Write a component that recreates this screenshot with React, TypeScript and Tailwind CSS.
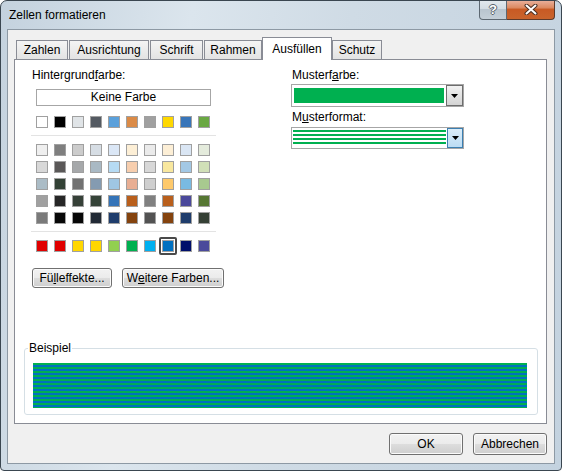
import React from 'react';

const themeRow = [
  'bg-[#ffffff]', 'bg-[#000000]', 'bg-[#e0e4e7]', 'bg-[#545a62]', 'bg-[#5aa0db]',
  'bg-[#db8b47]', 'bg-[#a0a0a0]', 'bg-[#ffd800]', 'bg-[#3875b9]', 'bg-[#6aa843]',
];

const tintRows = [
  ['bg-[#efefef]', 'bg-[#7f7f7f]', 'bg-[#cccccc]', 'bg-[#d6dde4]', 'bg-[#dbe7f6]', 'bg-[#fdefd6]', 'bg-[#ebebeb]', 'bg-[#fdefd6]', 'bg-[#dae6f4]', 'bg-[#e4ebdc]'],
  ['bg-[#d8d8d8]', 'bg-[#5a5858]', 'bg-[#a6a8aa]', 'bg-[#a9b9c4]', 'bg-[#b6dbf4]', 'bg-[#f7ceae]', 'bg-[#d8d8d8]', 'bg-[#f8e79e]', 'bg-[#a3c8e5]', 'bg-[#d1e0b8]'],
  ['bg-[#abbcc6]', 'bg-[#334135]', 'bg-[#727272]', 'bg-[#849bb1]', 'bg-[#9fc6e3]', 'bg-[#e8ae93]', 'bg-[#cfcfcf]', 'bg-[#fec96b]', 'bg-[#79bae2]', 'bg-[#a8c98f]'],
  ['bg-[#a0a0a0]', 'bg-[#262626]', 'bg-[#364138]', 'bg-[#364439]', 'bg-[#3574b8]', 'bg-[#b95f1c]', 'bg-[#808080]', 'bg-[#b95f1c]', 'bg-[#4b499b]', 'bg-[#567733]'],
  ['bg-[#7a7a7a]', 'bg-[#070707]', 'bg-[#070707]', 'bg-[#222a35]', 'bg-[#1f3d6c]', 'bg-[#84430e]', 'bg-[#535252]', 'bg-[#84430e]', 'bg-[#1f3d6c]', 'bg-[#354035]'],
];

const standardRow = [
  'bg-[#e00000]', 'bg-[#e00000]', 'bg-[#ffd700]', 'bg-[#ffd700]', 'bg-[#92d050]',
  'bg-[#00b050]', 'bg-[#00b0f0]', 'bg-[#0070c0]', 'bg-[#000f6b]', 'bg-[#4b4a9b]',
];

const tabs = [
  { label: 'Zahlen', cls: 'w-[52px]' },
  { label: 'Ausrichtung', cls: 'w-[80px] ml-[1px]' },
  { label: 'Schrift', cls: 'w-[53px] ml-[1px]' },
  { label: 'Rahmen', cls: 'w-[58px] ml-[1px]' },
  { label: 'Ausfüllen', cls: 'w-[70px] ml-0', active: true },
  { label: 'Schutz', cls: 'w-[50px] ml-0' },
];

const btn =
  'flex items-center justify-center rounded-[3px] border border-[#707070] bg-[linear-gradient(#f2f2f2_0%,#ebebeb_50%,#dddddd_50%,#cfcfcf_100%)] shadow-[inset_0_0_0_1px_#fbfbfb] leading-[15px]';

function Swatch({ c, selected }: { c: string; selected?: boolean }) {
  return (
    <span className="relative block">
      <span className={`block h-[12px] w-[12px] border border-[#a0a0a0] ${c}`} />
      {selected && (
        <span className="absolute -inset-[3px] rounded-[2px] border-2 border-[#4a4a4a]" />
      )}
    </span>
  );
}

function SwatchRow({ colors, selected }: { colors: string[]; selected?: number }) {
  return (
    <div className="flex gap-[6px]">
      {colors.map((c, i) => (
        <Swatch key={i} c={c} selected={i === selected} />
      ))}
    </div>
  );
}

function Arrow() {
  return (
    <svg width="7" height="4" viewBox="0 0 7 4">
      <polygon points="0,0 7,0 3.5,4" fill="#000" />
    </svg>
  );
}

export default function App() {
  return (
    <div className="relative h-[471px] w-[562px] overflow-hidden rounded-t-[7px] rounded-b-[4px] border border-[#3a4650] bg-[linear-gradient(100deg,#c4d2de_0%,#dbe5ed_30%,#cfdbe5_55%,#c3d2df_100%)] font-['Liberation_Sans',Arial,sans-serif] text-[12px] text-black">
      {/* title bar */}
      <div className="flex h-[28px] items-center pl-[8px] leading-[15px]">Zellen formatieren</div>

      <div className="absolute right-[6px] top-[-1px] flex h-[20px]">
        <div className="flex w-[28px] items-center justify-center rounded-bl-[4px] border border-t-0 border-[#5d6872] bg-[linear-gradient(#e3e9ee_0%,#d2dbe2_50%,#b9c5cf_50%,#c4cfd8_100%)] text-[13px] font-bold leading-none text-white [text-shadow:1px_0_0_#59636c,-1px_0_0_#59636c,0_1px_0_#59636c,0_-1px_0_#59636c]">
          ?
        </div>
        <div className="flex w-[48px] items-center justify-center rounded-br-[4px] border border-l-0 border-t-0 border-[#5d3a2a] bg-[linear-gradient(#eab3a0_0%,#db8a62_40%,#c85a24_50%,#c9642c_100%)]">
          <svg width="14" height="11" viewBox="0 0 14 11">
            <path d="M2.5 1.5 L11.5 9.5 M11.5 1.5 L2.5 9.5" stroke="#4a2e22" strokeWidth="4" strokeLinecap="round" />
            <path d="M2.5 1.5 L11.5 9.5 M11.5 1.5 L2.5 9.5" stroke="#ffffff" strokeWidth="2" strokeLinecap="round" />
          </svg>
        </div>
      </div>

      {/* client area */}
      <div className="mx-[6px] flex h-[435px] flex-col border border-[#8d99a4] bg-[#f0f0f0]">
        <div className="ml-[6px] mt-[7px] w-[533px]">
          <div className="relative z-10 flex h-[22px] items-end pl-[2px]">
            {tabs.map((t) =>
              t.active ? (
                <div
                  key={t.label}
                  className={`-mb-px flex h-[23px] items-center justify-center border border-b-0 border-[#898c95] bg-white leading-[15px] ${t.cls}`}
                >
                  {t.label}
                </div>
              ) : (
                <div
                  key={t.label}
                  className={`flex h-[19px] items-center justify-center border border-b-0 border-[#898c95] bg-[linear-gradient(#f4f4f4,#e3e3e3)] leading-[15px] ${t.cls}`}
                >
                  {t.label}
                </div>
              ),
            )}
          </div>

          <div className="flex h-[365px] flex-col border border-[#898c95] bg-white">
            <div className="flex pt-[8px]">
              {/* left column */}
              <div className="ml-[17px] flex w-[200px] flex-col">
                <div className="leading-[15px]">
                  Hintergrund<u>f</u>arbe:
                </div>
                <div className="ml-[4px] mt-[6px] flex h-[17px] w-[175px] items-center justify-center border border-[#a6a6a6] bg-white leading-[15px]">
                  Keine Farbe
                </div>
                <div className="ml-[4px] mt-[10px]">
                  <SwatchRow colors={themeRow} />
                </div>
                <div className="ml-[-1px] mt-[7px] h-px w-[185px] bg-[#e3e3e3]" />
                <div className="ml-[4px] mt-[8px] flex flex-col gap-[5px]">
                  {tintRows.map((r, i) => (
                    <SwatchRow key={i} colors={r} />
                  ))}
                </div>
                <div className="ml-[-1px] mt-[7px] h-px w-[185px] bg-[#e3e3e3]" />
                <div className="ml-[4px] mt-[8px]">
                  <SwatchRow colors={standardRow} selected={7} />
                </div>
                <div className="mt-[16px] flex gap-[10px]">
                  <div className={`h-[20px] w-[80px] ${btn}`}>
                    Fü<u>l</u>leffekte...
                  </div>
                  <div className={`h-[20px] w-[102px] ${btn}`}>
                    W<u>e</u>itere Farben...
                  </div>
                </div>
              </div>

              {/* right column */}
              <div className="ml-[59px] flex w-[173px] flex-col">
                <div className="ml-[1px] leading-[15px]">
                  Musterf<u>a</u>rbe:
                </div>
                <div className="mt-[1px] flex h-[23px] border border-[#a6a6a6] bg-white">
                  <div className="my-[3px] ml-[2px] w-[150px] bg-[#00b050]" />
                  <div className="ml-[2px] flex w-[17px] items-center justify-center border border-[#6d6d6d] bg-[linear-gradient(#f2f2f2,#d4d4d4)]">
                    <Arrow />
                  </div>
                </div>
                <div className="ml-[1px] mt-[3px] leading-[15px]">
                  M<u>u</u>sterformat:
                </div>
                <div className="mt-[2px] flex h-[22px] border border-[#a6a6a6] bg-white">
                  <div className="ml-[1px] mt-[2px] h-[14px] w-[153px] bg-[repeating-linear-gradient(to_bottom,#00b050_0px,#00b050_2px,#ffffff_2px,#ffffff_4px)]" />
                  <div className="ml-[1px] flex w-[16px] items-center justify-center border border-[#3c7fb1] bg-[linear-gradient(#dcedf9,#bcdcf3)]">
                    <Arrow />
                  </div>
                </div>
              </div>
            </div>

            {/* sample */}
            <div className="relative ml-[9px] mt-[60px] h-[67px] w-[514px] rounded-[3px] border border-[#d5dfe5]">
              <span className="absolute left-[3px] top-[-8px] bg-white px-[1px] leading-[15px]">Beispiel</span>
              <div className="ml-[8px] mt-[14px] h-[45px] w-[494px] bg-[repeating-linear-gradient(to_bottom,#00b050_0px,#00b050_2px,#0070c0_2px,#0070c0_4px)]" />
            </div>
          </div>
        </div>

        <div className="mt-[9px] flex justify-end gap-[10px] pr-[7px]">
          <div className={`h-[22px] w-[74px] ${btn}`}>OK</div>
          <div className={`h-[22px] w-[74px] ${btn}`}>Abbrechen</div>
        </div>
      </div>
    </div>
  );
}
